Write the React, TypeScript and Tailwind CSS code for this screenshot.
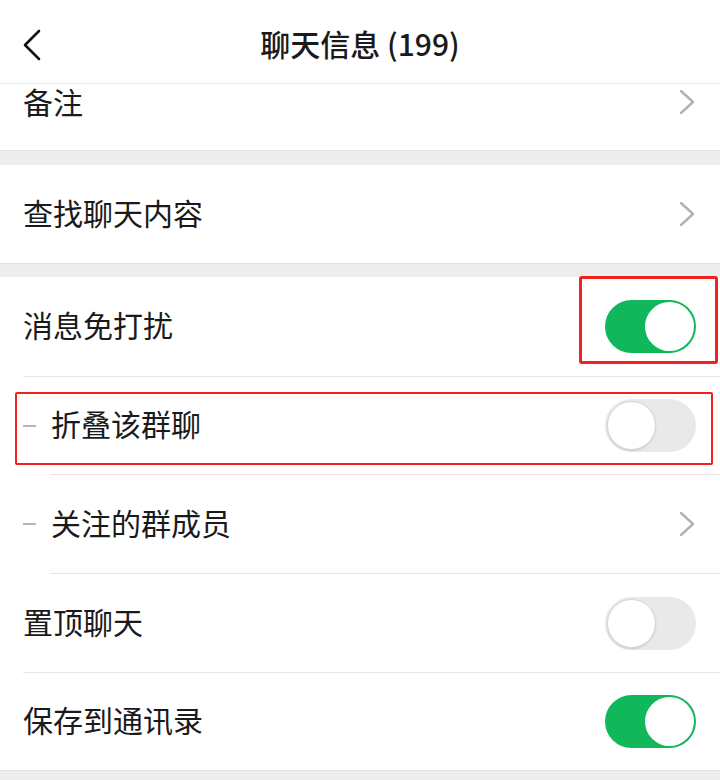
import type { ReactNode } from "react";

// 群聊设置页：导航栏 + 分组设置列表
const FONT = "font-['Noto_Sans_CJK_SC','Noto_Sans',sans-serif]";

function Chevron() {
  return (
    <svg width="18" height="26" viewBox="0 0 18 26" fill="none" className="shrink-0">
      <path
        d="M3 2 L15 13 L3 24"
        stroke="#b2b2b2"
        strokeWidth="2.4"
        strokeLinecap="round"
        strokeLinejoin="round"
      />
    </svg>
  );
}

function Toggle({ on }: { on: boolean }) {
  return (
    <div
      className={
        on
          ? "w-[91px] h-[53px] rounded-full bg-[#10b75b] p-[2px] flex justify-end"
          : "w-[91px] h-[53px] rounded-full bg-[#e9e9ea] p-[2px] flex justify-start"
      }
    >
      <div
        className={
          on
            ? "w-[49px] h-[49px] rounded-full bg-white"
            : "w-[49px] h-[49px] rounded-full bg-white border border-[#d6d6d6] shadow-[0_1px_2px_rgba(0,0,0,0.12)]"
        }
      />
    </div>
  );
}

function Row({
  label,
  sub,
  right,
  height,
  children,
}: {
  label: string;
  sub?: boolean;
  right: ReactNode;
  height: string;
  children?: ReactNode;
}) {
  return (
    <div className={`relative flex items-center pl-[23px] pr-[24px] bg-white ${height}`}>
      {sub && <span className="w-[13px] h-[2px] bg-[#b5b5b5] mr-[15px] shrink-0" />}
      <span className="flex-1 text-[30px] leading-none text-[#1a1a1a] pb-[5px]">{label}</span>
      {right}
      {children}
    </div>
  );
}

function Sep({ indent }: { indent: "full" | "sub" }) {
  return (
    <div className="bg-white">
      <div
        className={
          indent === "sub" ? "ml-[50px] h-px bg-[#e6e6e6]" : "ml-[23px] h-px bg-[#e6e6e6]"
        }
      />
    </div>
  );
}

function Gap({ h }: { h: string }) {
  return <div className={`${h} bg-[#ededed] border-t border-[#e3e3e3]`} />;
}

export default function App() {
  return (
    <div className={`w-[720px] h-[780px] overflow-hidden bg-[#ededed] ${FONT}`}>
      {/* 导航栏 */}
      <div className="relative h-[84px] bg-white border-b border-[#e8e8e8] flex items-center justify-center">
        <svg
          width="22"
          height="34"
          viewBox="0 0 22 34"
          fill="none"
          className="absolute left-[21px] top-[28px]"
        >
          <path
            d="M18 3 L4 17 L18 31"
            stroke="#111"
            strokeWidth="2.6"
            strokeLinecap="round"
            strokeLinejoin="round"
          />
        </svg>
        <span className="text-[30px] font-medium text-[#1a1a1a] leading-none pt-[2px]">
          聊天信息 (199)
        </span>
      </div>

      {/* 列表已滚动，备注行只露出下半部分 */}
      <div className="h-[66px] bg-white flex items-start pl-[23px] pr-[24px] pt-[2px]">
        <span className="flex-1 text-[30px] leading-none text-[#1a1a1a]">备注</span>
        <div className="pt-[3px]">
          <Chevron />
        </div>
      </div>

      <Gap h="h-[15px]" />
      <Row label="查找聊天内容" right={<Chevron />} height="h-[98px]" />
      <Gap h="h-[14px]" />

      <Row label="消息免打扰" right={<Toggle on />} height="h-[99px]">
        <div className="absolute left-[579px] top-[-1px] w-[139px] h-[88px] border-[3px] border-[#f0201c] rounded-[3px]" />
      </Row>
      <Sep indent="full" />
      <Row label="折叠该群聊" sub right={<Toggle on={false} />} height="h-[97px]">
        <div className="absolute left-[15px] top-[15px] w-[698px] h-[73px] border-2 border-[#f0201c] rounded-[2px]" />
      </Row>
      <Sep indent="sub" />
      <Row label="关注的群成员" sub right={<Chevron />} height="h-[98px]" />
      <Sep indent="sub" />
      <Row label="置顶聊天" right={<Toggle on={false} />} height="h-[98px]" />
      <Sep indent="full" />
      <Row label="保存到通讯录" right={<Toggle on />} height="h-[97px]" />
      <Gap h="h-[10px]" />
    </div>
  );
}
